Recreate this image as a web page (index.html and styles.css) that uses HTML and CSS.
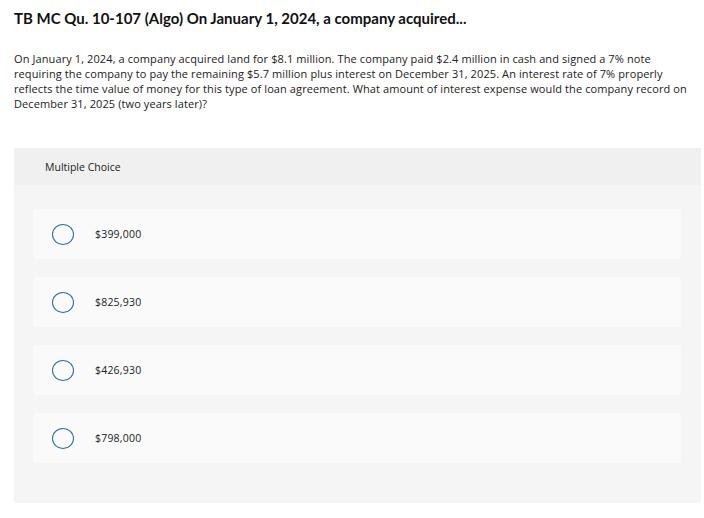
FILE: index.html
```html
<!DOCTYPE html>
<html>
<head>
<meta charset="utf-8">
<link rel="stylesheet" href="styles.css">
</head>
<body>
<div class="page">
  <h1 class="title">TB MC Qu. 10-107 (Algo) On January 1, 2024, a company acquired...</h1>
  <p class="question">On January 1, 2024, a company acquired land for $8.1 million. The company paid $2.4 million in cash and signed a 7% note requiring the company to pay the remaining $5.7 million plus interest on December 31, 2025. An interest rate of 7% properly reflects the time value of money for this type of loan agreement. What amount of interest expense would the company record on December 31, 2025 (two years later)?</p>
  <div class="panel">
    <div class="panel-head">Multiple Choice</div>
    <div class="panel-body">
      <div class="option"><span class="radio"></span><span class="label">$399,000</span></div>
      <div class="option"><span class="radio"></span><span class="label">$825,930</span></div>
      <div class="option"><span class="radio"></span><span class="label">$426,930</span></div>
      <div class="option"><span class="radio"></span><span class="label">$798,000</span></div>
    </div>
  </div>
</div>
</body>
</html>
```
FILE: styles.css
```css
html, body { margin: 0; padding: 0; background: #fff; }
body { font-family: "Open Sans", sans-serif; color: #1a1a1a; }
.page { padding: 9px 3px 0 14px; }
.title { margin: 0; font-family: Lato, "Open Sans", sans-serif; font-size: 15px; font-weight: 700; line-height: 18px; color: #111; }
.question { margin: 24px 0 0 0; font-size: 11px; line-height: 15px; color: #222; width: 678px; letter-spacing: 0.1px; }
.panel { margin-top: 37px; background: #f5f5f5; border-radius: 2px; }
.panel-head { background: #f0f0f0; height: 37px; display: flex; align-items: center; padding-left: 31px; font-size: 10.5px; color: #222; }
.panel-body { padding: 24px 20px 40px 19px; display: flex; flex-direction: column; gap: 18px; }
.option { height: 50px; background: #fafafa; border-radius: 2px; display: flex; align-items: center; padding-left: 19px; }
.radio { width: 20px; height: 19px; border: 1.5px solid #2d6aa0; border-radius: 50%; box-sizing: content-box; flex: none; }
.label { margin-left: 21px; font-size: 10.5px; color: #222; letter-spacing: 0.2px; }
```
